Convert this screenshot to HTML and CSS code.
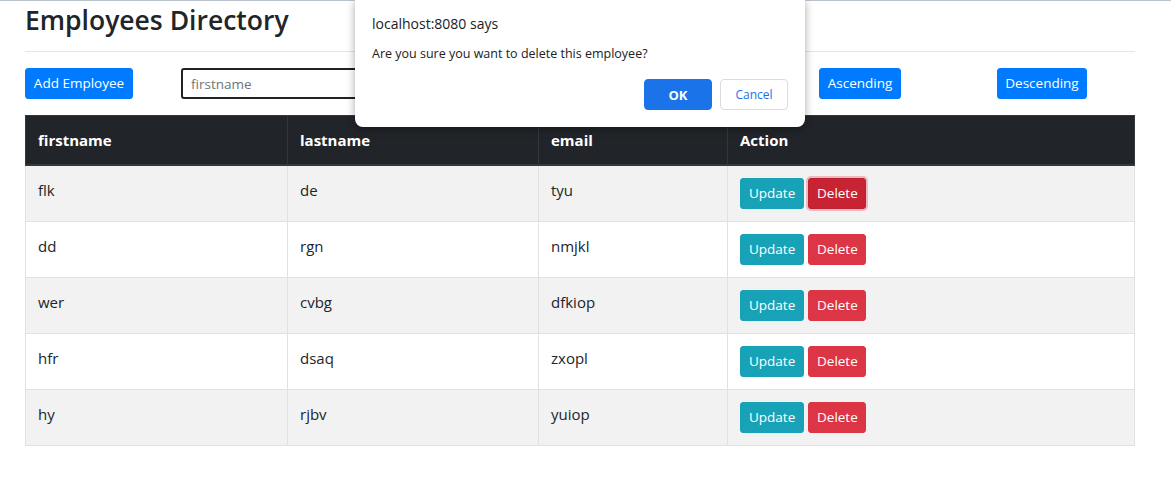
FILE: index.html
```html
<!DOCTYPE html>
<html>
<head>
<meta charset="utf-8">
<link rel="stylesheet" href="styles.css">
</head>
<body>
<div class="topline"></div>
<div class="container">
  <h2 class="title">Employees Directory</h2>
  <hr class="sep">
  <div class="toolbar">
    <button class="btn btn-primary add">Add Employee</button>
    <input class="search" type="text" placeholder="firstname">
    <button class="btn btn-primary asc">Ascending</button>
    <button class="btn btn-primary desc">Descending</button>
  </div>
  <table class="table">
    <thead>
      <tr><th class="c1">firstname</th><th class="c2">lastname</th><th class="c3">email</th><th>Action</th></tr>
    </thead>
    <tbody>
      <tr class="odd"><td>flk</td><td>de</td><td>tyu</td><td><button class="btn btn-info">Update</button><button class="btn btn-danger active">Delete</button></td></tr>
      <tr><td>dd</td><td>rgn</td><td>nmjkl</td><td><button class="btn btn-info">Update</button><button class="btn btn-danger">Delete</button></td></tr>
      <tr class="odd"><td>wer</td><td>cvbg</td><td>dfkiop</td><td><button class="btn btn-info">Update</button><button class="btn btn-danger">Delete</button></td></tr>
      <tr><td>hfr</td><td>dsaq</td><td>zxopl</td><td><button class="btn btn-info">Update</button><button class="btn btn-danger">Delete</button></td></tr>
      <tr class="odd"><td>hy</td><td>rjbv</td><td>yuiop</td><td><button class="btn btn-info">Update</button><button class="btn btn-danger">Delete</button></td></tr>
    </tbody>
  </table>
</div>
<div class="dialog">
  <div class="dlg-title">localhost:8080 says</div>
  <div class="dlg-msg">Are you sure you want to delete this employee?</div>
  <div class="dlg-actions">
    <button class="dbtn ok">OK</button>
    <button class="dbtn cancel">Cancel</button>
  </div>
</div>
</body>
</html>
```
FILE: styles.css
```css
* { box-sizing: border-box; }
body {
  margin: 0;
  font-family: "Open Sans", "Noto Sans", Arial, sans-serif;
  color: #212529;
  background: #fff;
  font-size: 15px;
}
.topline {
  height: 1px;
  background: #b9c1cc;
}
.container {
  width: 1110px;
  margin-left: 25px;
}
.title {
  margin: 0;
  font-size: 26.5px;
  font-weight: 600;
  line-height: 36px;
  padding-top: 1px;
}
.sep {
  margin: 13px 0 16px;
  border: 0;
  border-top: 1px solid rgba(0,0,0,.1);
}
.toolbar {
  display: flex;
  align-items: center;
  height: 31px;
}
.btn {
  font-family: inherit;
  font-size: 13.5px;
  line-height: 21px;
  padding: 4px 8px;
  border: 1px solid transparent;
  border-radius: 3px;
  color: #fff;
  cursor: pointer;
  height: 31px;
  white-space: nowrap;
}
.btn-primary { background: #007bff; border-color: #007bff; padding: 4px 6px; }
.btn-info { background: #17a2b8; border-color: #17a2b8; width: 64px; }
.btn-danger { background: #dc3545; border-color: #dc3545; margin-left: 4px; width: 58px; }
.btn-danger.active { background: #c82333; border-color: #bd2130; box-shadow: 0 0 0 2px rgba(225,83,97,.35); }
.add { width: 108px; }
.search {
  margin-left: 48px;
  width: 590px;
  height: 31px;
  border: 2px solid #222;
  border-radius: 3px;
  padding: 0 8px;
  font-family: inherit;
  font-size: 13.5px;
  color: #495057;
  outline: none;
}
.search::placeholder { color: #6c757d; }
.asc { margin-left: 48px; width: 82px; }
.desc { margin-left: 96px; width: 90px; }
.table {
  margin-top: 16px;
  width: 1110px;
  border-collapse: collapse;
}
.table th, .table td {
  border: 1px solid #dee2e6;
  padding: 12px;
  text-align: left;
  vertical-align: top;
  line-height: 24px;
}
.table th {
  background: #212529;
  color: #fff;
  border-color: #32383e;
  border-bottom-width: 2px;
  font-weight: 700;
}
.c1 { width: 262px; }
.c2 { width: 251px; }
.c3 { width: 189px; }
.table td { height: 56px; }
tr.odd td { background: #f2f2f2; }
.dialog {
  position: absolute;
  left: 355px;
  top: 0;
  width: 450px;
  height: 127px;
  background: #fff;
  border-radius: 0 0 8px 8px;
  box-shadow: 0 2px 8px rgba(0,0,0,.35);
  padding: 14px 17px 0;
}
.dlg-title {
  font-size: 14px;
  line-height: 20px;
  color: #202124;
}
.dlg-msg {
  font-size: 12.5px;
  line-height: 18px;
  margin-top: 11px;
  color: #202124;
}
.dlg-actions {
  display: flex;
  justify-content: flex-end;
  margin-top: 16px;
  gap: 8px;
}
.dbtn {
  width: 68px;
  height: 31px;
  border-radius: 4px;
  font-family: inherit;
  font-size: 12px;
}
.ok { background: #1a73e8; border: 1px solid #1a73e8; color: #fff; font-weight: 700; font-size: 13px; }
.cancel { background: #fff; border: 1px solid #dadce0; color: #1a73e8; }
```
